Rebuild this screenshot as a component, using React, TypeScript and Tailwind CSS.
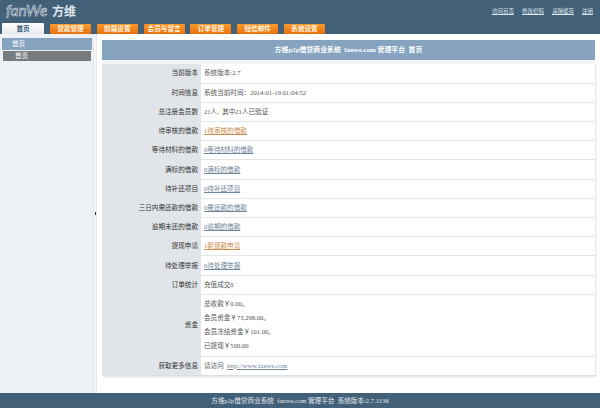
export default function App() {
  const tabs = ["贷款管理", "前端设置", "会员与留言", "订单管理", "短信邮件", "系统设置"];
  const links = ["访问首页", "修改密码", "清除缓存", "注销"];
  const rows: [string, React.ReactNode][] = [
    ["当前版本", "系统版本:2.7"],
    ["时间信息", "系统当前时间：2014-01-19 01:04:52"],
    ["总注册会员数", "21人,  其中21人已验证"],
    ["待审核的借款", <a className="underline text-[#c98a4a]">1待审核的借款</a>],
    ["等待材料的借款", <a className="underline text-[#6f8499]">0等待材料的借款</a>],
    ["满标的借款", <a className="underline text-[#6f8499]">0满标的借款</a>],
    ["待补还项目", <a className="underline text-[#6f8499]">0待补还项目</a>],
    ["三日内需还款的借款", <a className="underline text-[#6f8499]">0需还款的借款</a>],
    ["逾期未还的借款", <a className="underline text-[#6f8499]">0逾期的借款</a>],
    ["提现申请", <a className="underline text-[#c98a4a]">1新提款申请</a>],
    ["待处理举报", <a className="underline text-[#6f8499]">0待处理举报</a>],
    ["订单统计", "充值成交0"],
  ];
  return (
    <div className="flex flex-col w-[600px] h-[408px] overflow-hidden bg-white text-[6.6px] text-[#555] font-['Liberation_Serif','Noto_Sans_CJK_SC',serif]">
      <header className="h-[34px] shrink-0 bg-[#436079] flex flex-col">
        <div className="h-[23px] flex justify-between items-start pl-[6px] pr-[7px]">
          <div className="flex items-center gap-[5px] pt-[2px]">
            <span className="w-[41px] text-[15.5px] leading-[17px] italic font-['Lato',sans-serif] text-transparent [-webkit-text-stroke:0.5px_#e8eef3]">fanWe</span>
            <span className="text-[12px] leading-[17px] font-bold font-['Noto_Sans_CJK_SC',sans-serif] text-[#dfe7ee]">方维</span>
          </div>
          <div className="flex gap-[8px] pt-[7px] text-[5.5px] text-[#dfe7ee]">
            {links.map((l) => (
              <a key={l} className="underline">{l}</a>
            ))}
          </div>
        </div>
        <div className="h-[11px] flex pl-[2px]">
          <div className="w-[42px] h-[11px] bg-gradient-to-b from-white to-[#e6ebef] rounded-t-[1px] flex items-center justify-center text-[#33597a] font-bold">首页</div>
          <div className="flex gap-[5.8px] ml-[6px] pt-[1px]">
            {tabs.map((t) => (
              <div key={t} className="w-[41px] h-[10px] rounded-[1px] bg-gradient-to-b from-[#f99a2a] to-[#e8700c] text-[#fff3e0] font-bold flex items-center justify-center">{t}</div>
            ))}
          </div>
        </div>
      </header>
      <div className="flex-1 flex min-h-0">
        <aside className="w-[93px] shrink-0 bg-[#eef2f6] pt-[4px] pl-[2px] pr-[1px]">
          <div className="h-[12px] bg-[#86a3bf] text-white pl-[10px] flex items-center">首页</div>
          <div className="h-[10px] mt-[1px] mx-[1px] bg-[#777b7d] text-white pl-[12px] flex items-center">首页</div>
        </aside>
        <div className="w-[4px] shrink-0 bg-[#f4f6f8] border-x border-[#e6eaee] flex items-center justify-center">
          <div className="w-[1px] h-[3px] bg-[#333]"></div>
        </div>
        <main className="flex-1 pl-[5px] pr-[5px] pt-[6px] min-w-0">
          <div className="h-[20px] bg-[#86a3bf] text-white text-[6.9px] font-bold flex items-center justify-center">方维p2p借贷商业系统&nbsp; fanwe.com 管理平台&nbsp; 首页</div>
          <div className="h-[4px] bg-[#f2f4f6]"></div>
          <table className="w-full border-collapse table-fixed shadow-[1px_1px_2px_rgba(0,0,0,0.12)]">
            <tbody>
              {rows.map(([k, v]) => (
                <tr key={k} className="h-[19.2px] border-b border-[#e3e6e9]">
                  <td className="w-[99px] bg-[#e1e5e9] text-right pr-[3px] text-[#333] p-0">{k}</td>
                  <td className="pl-[3px] p-0 whitespace-pre">{v}</td>
                </tr>
              ))}
              <tr className="h-[62px] border-b border-[#e3e6e9]">
                <td className="bg-[#e1e5e9] text-right pr-[3px] text-[#333] p-0">资金</td>
                <td className="pl-[3px] p-0 leading-[14px]">
                  <div>总收款￥0.00。</div>
                  <div>会员资金￥73,298.00。</div>
                  <div>会员冻结资金￥101.00。</div>
                  <div>已提现￥500.00</div>
                </td>
              </tr>
              <tr className="h-[19px] border-b border-[#dcdfe2]">
                <td className="bg-[#e1e5e9] text-right pr-[3px] text-[#333] p-0">获取更多信息</td>
                <td className="pl-[3px] p-0">请访问&nbsp; <a className="underline text-[#6f8499]">http://www.fanwe.com</a></td>
              </tr>
            </tbody>
          </table>
        </main>
      </div>
      <footer className="h-[15px] shrink-0 bg-[#436079] text-[#e3eaf0] flex items-center justify-center">方维p2p借贷商业系统&nbsp; fanwe.com 管理平台&nbsp; 系统版本:2.7.1136</footer>
    </div>
  );
}
